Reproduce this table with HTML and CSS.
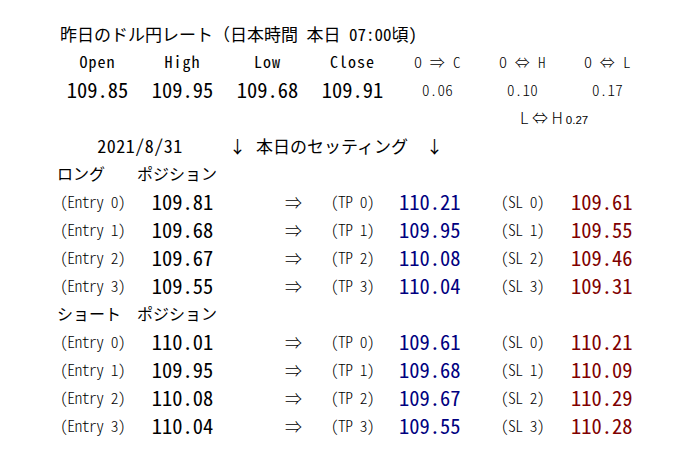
FILE: index.html
```html
<!DOCTYPE html>
<html lang="ja">
<head>
<meta charset="utf-8">
<title>昨日のドル円レート</title>
<link rel="stylesheet" href="styles.css">
</head>
<body>
<div class="sheet">
  <div class="title all">昨日のドル円レート<span class="fw">（</span>日本時間 本日 07:00頃)</div>

  <div class="hd c">Open</div>
  <div class="hd c">High</div>
  <div class="hd c">Low</div>
  <div class="hd c">Close</div>
  <div class="sm c">O ⇒ C</div>
  <div class="sm c">O ⇔ H</div>
  <div class="sm c">O ⇔ L</div>

  <div class="num c">109.85</div>
  <div class="num c">109.95</div>
  <div class="num c">109.68</div>
  <div class="num c">109.91</div>
  <div class="sm c">0.06</div>
  <div class="sm c">0.10</div>
  <div class="sm c">0.17</div>

  <div class="lh"><span class="lh-l">L ⇔ H</span><span class="lh-v">0.27</span></div>

  <div class="date">2021/8/31</div>
  <div class="setting"><span>↓</span><span>本日のセッティング</span><span>↓</span></div>

  <div class="sec all"><span class="sec-a">ロング</span><span>ポジション</span></div>

  <div class="lbl">(Entry 0)</div><div class="num c">109.81</div><div class="arr">⇒</div><div class="lbl c">(TP 0)</div><div class="num tp">110.21</div><div class="lbl c">(SL 0)</div><div class="num sl">109.61</div>
  <div class="lbl">(Entry 1)</div><div class="num c">109.68</div><div class="arr">⇒</div><div class="lbl c">(TP 1)</div><div class="num tp">109.95</div><div class="lbl c">(SL 1)</div><div class="num sl">109.55</div>
  <div class="lbl">(Entry 2)</div><div class="num c">109.67</div><div class="arr">⇒</div><div class="lbl c">(TP 2)</div><div class="num tp">110.08</div><div class="lbl c">(SL 2)</div><div class="num sl">109.46</div>
  <div class="lbl">(Entry 3)</div><div class="num c">109.55</div><div class="arr">⇒</div><div class="lbl c">(TP 3)</div><div class="num tp">110.04</div><div class="lbl c">(SL 3)</div><div class="num sl">109.31</div>

  <div class="sec all"><span class="sec-a">ショート</span><span>ポジション</span></div>

  <div class="lbl">(Entry 0)</div><div class="num c">110.01</div><div class="arr">⇒</div><div class="lbl c">(TP 0)</div><div class="num tp">109.61</div><div class="lbl c">(SL 0)</div><div class="num sl">110.21</div>
  <div class="lbl">(Entry 1)</div><div class="num c">109.95</div><div class="arr">⇒</div><div class="lbl c">(TP 1)</div><div class="num tp">109.68</div><div class="lbl c">(SL 1)</div><div class="num sl">110.09</div>
  <div class="lbl">(Entry 2)</div><div class="num c">110.08</div><div class="arr">⇒</div><div class="lbl c">(TP 2)</div><div class="num tp">109.67</div><div class="lbl c">(SL 2)</div><div class="num sl">110.29</div>
  <div class="lbl">(Entry 3)</div><div class="num c">110.04</div><div class="arr">⇒</div><div class="lbl c">(TP 3)</div><div class="num tp">109.55</div><div class="lbl c">(SL 3)</div><div class="num sl">110.28</div>
</div>
</body>
</html>
```

FILE: styles.css
```css
html, body {
  margin: 0;
  padding: 0;
  background: #fff;
}

body {
  font-family: "Noto Sans CJK JP", "DejaVu Sans", sans-serif;
  font-feature-settings: "hwid" 1;
  color: #000;
}

.sheet {
  display: grid;
  grid-template-columns: repeat(7, 85px);
  grid-auto-rows: 28px;
  align-items: center;
  padding: 19px 0 0 55px;
  white-space: nowrap;
}

.all { grid-column: 1 / -1; }
.c { justify-self: center; }

.title {
  font-size: 17px;
  padding-left: 5px;
}
.title .fw { font-feature-settings: normal; }

.hd { font-size: 16px; letter-spacing: 1px; }
.sm { font-size: 15px; letter-spacing: 0.3px; font-weight: 300; }
.num { font-size: 20.5px; }

.lh {
  grid-column: 6 / 8;
  padding-left: 40px;
  display: flex;
  align-items: baseline;
  gap: 3px;
}
.lh-l { font-size: 16px; font-feature-settings: normal; font-weight: 300; }
.lh-v { font-size: 11.5px; font-family: "Liberation Sans", sans-serif; font-feature-settings: normal; }

.date {
  grid-column: 1 / 3;
  justify-self: center;
  font-size: 18px;
  letter-spacing: 0.5px;
}
.setting {
  grid-column: 3 / 8;
  font-size: 17px;
  padding-left: 4px;
  display: flex;
  gap: 10px;
  font-feature-settings: normal;
}
.setting span:last-child { margin-left: 8px; }

.sec {
  font-size: 16px;
  padding-left: 2px;
  display: flex;
  font-feature-settings: normal;
}
.sec-a { width: 80px; }

.lbl {
  font-size: 15.5px;
  letter-spacing: -0.5px;
  padding-left: 5px;
  font-weight: 300;
}
.lbl.c { padding-left: 0; }

.arr {
  justify-self: end;
  padding-right: 8px;
  font-size: 17px;
  font-weight: 300;
}

.tp { color: #000080; padding-left: 4px; }
.sl { color: #800000; padding-left: 6px; }
```
